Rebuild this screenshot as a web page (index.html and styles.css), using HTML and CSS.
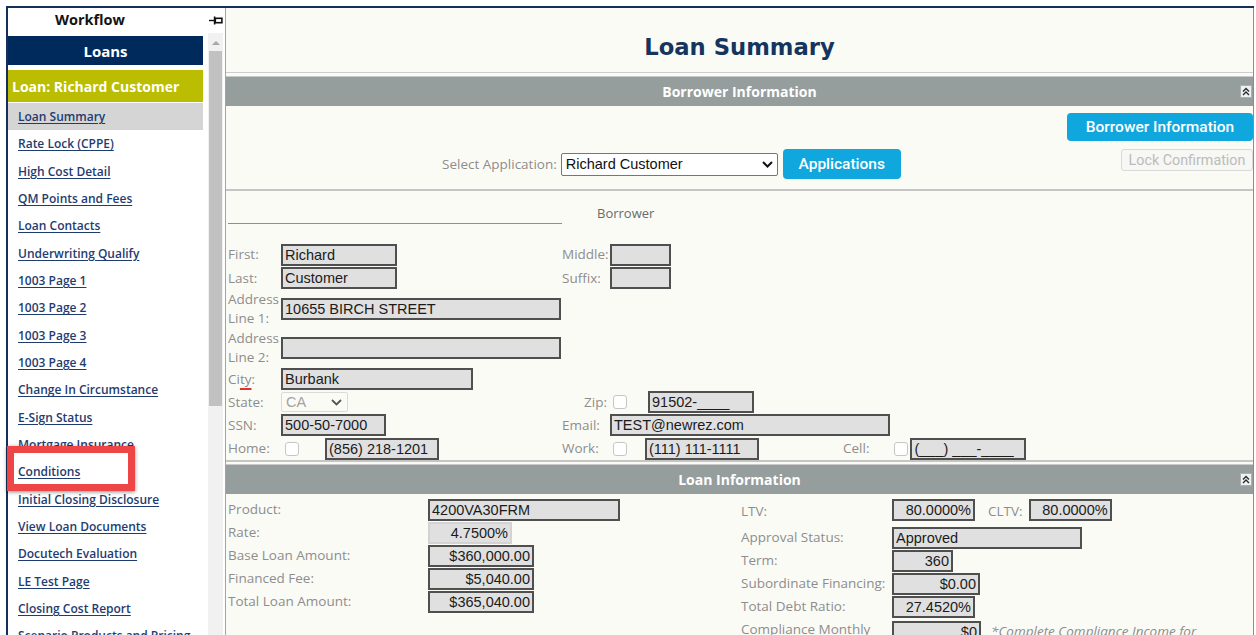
FILE: index.html
```html
<!DOCTYPE html>
<html lang="en">
<head>
<meta charset="utf-8">
<title>Loan Summary</title>
<link rel="stylesheet" href="styles.css">
</head>
<body>
<div class="window">
  <aside class="sidebar">
    <div class="wf-head">
      <span class="wf-title">Workflow</span>
      <svg class="pin" width="14" height="9" viewBox="0 0 14 9" aria-hidden="true">
        <path d="M0 4.5H5" stroke="#111" stroke-width="1.4"/>
        <path d="M5.6 0.5V8.5" stroke="#111" stroke-width="1.6"/>
        <rect x="6.3" y="2.3" width="6.6" height="4.4" fill="none" stroke="#111" stroke-width="1.6"/>
      </svg>
    </div>
    <div class="wf-body">
      <nav class="wf-list">
        <div class="loans-bar">Loans</div>
        <div class="loan-bar">Loan: Richard Customer</div>
        <a class="wf-link is-active" href="#">Loan Summary</a>
        <a class="wf-link" href="#">Rate Lock (CPPE)</a>
        <a class="wf-link" href="#">High Cost Detail</a>
        <a class="wf-link" href="#">QM Points and Fees</a>
        <a class="wf-link" href="#">Loan Contacts</a>
        <a class="wf-link" href="#">Underwriting Qualify</a>
        <a class="wf-link" href="#">1003 Page 1</a>
        <a class="wf-link" href="#">1003 Page 2</a>
        <a class="wf-link" href="#">1003 Page 3</a>
        <a class="wf-link" href="#">1003 Page 4</a>
        <a class="wf-link" href="#">Change In Circumstance</a>
        <a class="wf-link" href="#">E-Sign Status</a>
        <a class="wf-link" href="#">Mortgage Insurance</a>
        <a class="wf-link" href="#">Conditions</a>
        <a class="wf-link" href="#">Initial Closing Disclosure</a>
        <a class="wf-link" href="#">View Loan Documents</a>
        <a class="wf-link" href="#">Docutech Evaluation</a>
        <a class="wf-link" href="#">LE Test Page</a>
        <a class="wf-link" href="#">Closing Cost Report</a>
        <a class="wf-link" href="#">Scenario Products and Pricing</a>
      </nav>
      <div class="scrollbar">
        <span class="scroll-up"></span>
        <span class="scroll-thumb"></span>
      </div>
    </div>
    <div class="callout"></div>
  </aside>

  <main class="main">
    <h1 class="page-title">Loan Summary</h1>

    <div class="bar">
      <span></span>
      <span class="bar-title">Borrower Information</span>
      <svg class="collapse" width="12" height="13" viewBox="0 0 12 13" aria-hidden="true">
        <rect x="0.5" y="0.5" width="11" height="12" fill="#eef1f1" stroke="#a9b0b0"/>
        <path d="M3 6.5L6 3.5L9 6.5M3 10L6 7L9 10" fill="none" stroke="#2a2a2a" stroke-width="1.4"/>
      </svg>
    </div>

    <div class="app-row">
      <div class="app-select">
        <span class="lbl">Select Application:</span>
        <div class="select">
          <span>Richard Customer</span>
          <svg width="11" height="7" viewBox="0 0 11 7" aria-hidden="true"><path d="M1 1l4.5 4.5L10 1" fill="none" stroke="#111" stroke-width="2"/></svg>
        </div>
        <button class="btn btn-apps" type="button">Applications</button>
      </div>
      <div class="app-actions">
        <button class="btn btn-borrower" type="button">Borrower Information</button>
        <button class="btn-lock" type="button" disabled>Lock Confirmation</button>
      </div>
    </div>

    <section class="borrower">
      <div class="b-head">
        <div class="b-head-line"></div>
        <div class="b-head-title">Borrower</div>
      </div>

      <div class="frow">
        <span class="lbl">First:</span>
        <div class="cell"><span class="fld w116">Richard</span></div>
        <span class="lbl">Middle:</span>
        <div class="cell"><span class="fld w61"></span></div>
      </div>
      <div class="frow h24">
        <span class="lbl">Last:</span>
        <div class="cell"><span class="fld w116">Customer</span></div>
        <span class="lbl">Suffix:</span>
        <div class="cell"><span class="fld w61"></span></div>
      </div>
      <div class="frow h38">
        <span class="lbl">Address<br>Line 1:</span>
        <div class="cell"><span class="fld w280">10655 BIRCH STREET</span></div>
      </div>
      <div class="frow h39">
        <span class="lbl">Address<br>Line 2:</span>
        <div class="cell"><span class="fld w280"></span></div>
      </div>
      <div class="frow h24">
        <span class="lbl">Ci<span class="spell">ty</span>:</span>
        <div class="cell"><span class="fld w192">Burbank</span></div>
      </div>
      <div class="frow h22">
        <span class="lbl">State:</span>
        <div class="cell">
          <div class="sel-off">
            <span>CA</span>
            <svg width="11" height="7" viewBox="0 0 11 7" aria-hidden="true"><path d="M1 1l4.5 4.5L10 1" fill="none" stroke="#555" stroke-width="1.8"/></svg>
          </div>
        </div>
        <span class="lbl r">Zip:</span>
        <div class="cell">
          <span class="chk ml3"></span>
          <span class="fld w106 ml21">91502-____</span>
        </div>
      </div>
      <div class="frow h24">
        <span class="lbl">SSN:</span>
        <div class="cell"><span class="fld w105">500-50-7000</span></div>
        <span class="lbl">Email:</span>
        <div class="cell"><span class="fld w280">TEST@newrez.com</span></div>
      </div>
      <div class="frow">
        <span class="lbl">Home:</span>
        <div class="cell">
          <span class="chk ml4"></span>
          <span class="fld w114 ml26">(856) 218-1201</span>
        </div>
        <span class="lbl">Work:</span>
        <div class="cell">
          <span class="chk ml3"></span>
          <span class="fld w114 ml18">(111) 111-1111</span>
          <span class="lbl ml84">Cell:</span>
          <span class="chk ml25"></span>
          <span class="fld w116 ml2">(___) ___-____</span>
        </div>
      </div>
    </section>

    <div class="bar bar-tight">
      <span></span>
      <span class="bar-title">Loan Information</span>
      <svg class="collapse" width="12" height="13" viewBox="0 0 12 13" aria-hidden="true">
        <rect x="0.5" y="0.5" width="11" height="12" fill="#eef1f1" stroke="#a9b0b0"/>
        <path d="M3 6.5L6 3.5L9 6.5M3 10L6 7L9 10" fill="none" stroke="#2a2a2a" stroke-width="1.4"/>
      </svg>
    </div>

    <section class="loan">
      <div class="loan-left">
        <div class="lrow"><span class="lbl lcol">Product:</span><span class="fld w192">4200VA30FRM</span></div>
        <div class="lrow"><span class="lbl lcol">Rate:</span><span class="fld soft num w84">4.7500%</span></div>
        <div class="lrow"><span class="lbl lcol">Base Loan Amount:</span><span class="fld num w106">$360,000.00</span></div>
        <div class="lrow"><span class="lbl lcol">Financed Fee:</span><span class="fld num w106">$5,040.00</span></div>
        <div class="lrow"><span class="lbl lcol">Total Loan Amount:</span><span class="fld num w106">$365,040.00</span></div>
      </div>
      <div class="loan-right">
        <div class="lrow ltv">
          <span class="lbl rcol">LTV:</span>
          <span class="fld num w83">80.0000%</span>
          <span class="lbl ml13">CLTV:</span>
          <span class="fld num w83 ml6">80.0000%</span>
        </div>
        <div class="lrow"><span class="lbl rcol">Approval Status:</span><span class="fld w190">Approved</span></div>
        <div class="lrow"><span class="lbl rcol">Term:</span><span class="fld num w61">360</span></div>
        <div class="lrow"><span class="lbl rcol">Subordinate Financing:</span><span class="fld num w88">$0.00</span></div>
        <div class="lrow"><span class="lbl rcol">Total Debt Ratio:</span><span class="fld num w83">27.4520%</span></div>
        <div class="lrow income">
          <span class="lbl rcol wrap">Compliance Monthly Income:</span>
          <span class="fld num w89">$0</span>
          <span class="note">*Complete Compliance Income for</span>
        </div>
      </div>
    </section>
  </main>
</div>
</body>
</html>
```

FILE: styles.css
```css
* { box-sizing: border-box; }

html, body { margin: 0; padding: 0; }

body {
  width: 1256px;
  height: 635px;
  overflow: hidden;
  background: #fff;
  font-family: "Open Sans", "Liberation Sans", sans-serif;
}

.window {
  display: flex;
  width: 1248px;
  height: 629px;
  margin: 6px 0 0 6px;
  border-top: 2px solid #14305a;
  border-left: 2px solid #14305a;
}

/* ---------- workflow sidebar ---------- */
.sidebar {
  position: relative;
  width: 217px;
  flex: none;
  display: flex;
  flex-direction: column;
  background: #fff;
}

.wf-head {
  height: 28px;
  flex: none;
  display: flex;
  align-items: flex-start;
  padding-top: 2px;
}

.wf-title {
  margin-left: 47px;
  font-size: 14.5px;
  font-weight: 700;
  line-height: 20px;
  color: #141414;
}

.pin { margin: 6px 2px 0 auto; }

.wf-body {
  flex: 1;
  min-height: 0;
  display: flex;
}

.wf-list {
  width: 195px;
  flex: none;
  overflow: hidden;
}

.loans-bar {
  height: 29px;
  display: flex;
  align-items: center;
  justify-content: center;
  background: #012a5c;
  color: #fff;
  font-size: 15px;
  font-weight: 700;
}

.loan-bar {
  height: 32px;
  margin-top: 5px;
  padding-left: 4px;
  display: flex;
  align-items: center;
  background: #bbbd00;
  color: #fff;
  font-size: 14px;
  font-weight: 700;
  white-space: nowrap;
}

.wf-link {
  height: 27.33px;
  padding-left: 10px;
  display: flex;
  align-items: center;
  color: #1f3c70;
  font-size: 12px;
  font-weight: 600;
  text-decoration: underline;
  text-underline-offset: 2px;
  white-space: nowrap;
}

.wf-link.is-active {
  margin-top: 1px;
  background: #d5d5d5;
}

.scrollbar {
  width: 15px;
  margin: -3px 0 0 5px;
  display: flex;
  flex-direction: column;
  align-items: center;
  background: #f1f1f1;
}

.scroll-up {
  margin-top: 8px;
  border-left: 4px solid transparent;
  border-right: 4px solid transparent;
  border-bottom: 4px solid #a6a6a6;
}

.scroll-thumb {
  width: 13px;
  height: 355px;
  margin-top: 6px;
  background: #c1c1c1;
}

/* highlight frame drawn over the Conditions link */
.callout {
  position: absolute;
  left: -1px;
  top: 438px;
  width: 128px;
  height: 45px;
  border: 7px solid #ee4646;
  box-shadow: 0 1px 4px rgba(0, 0, 0, 0.45);
}

/* ---------- main page ---------- */
.main {
  flex: 1;
  min-width: 0;
  overflow: hidden;
  background: #fbfbf6;
  border-left: 1px solid #a3a3a3;
  border-right: 1px solid #8c8c8c;
}

.page-title {
  margin: 0;
  height: 65px;
  padding-top: 24px;
  border-bottom: 1px solid #cdcdcd;
  text-align: center;
  font: 700 22.7px/30px "DejaVu Sans", sans-serif;
  color: #15355e;
}

.bar {
  display: grid;
  grid-template-columns: 1fr auto 1fr;
  align-items: center;
  height: 30px;
  margin-top: 3px;
  border-top: 1px solid #c9c9c9;
  background: #969d9d;
}

.bar-tight { margin-top: 2px; }

.bar-title {
  color: #fff;
  font-size: 14px;
  font-weight: 700;
}

.collapse {
  justify-self: end;
  margin-right: 1px;
}

/* application chooser */
.app-row {
  display: flex;
  height: 85px;
  padding: 7px 0 10px 216px;
  border-bottom: 2px solid #c5c5c5;
}

.app-select {
  align-self: flex-end;
  display: flex;
  align-items: center;
}

.app-select .lbl { margin-right: 4px; }

.select {
  width: 217px;
  height: 23px;
  padding: 0 4px;
  display: flex;
  align-items: center;
  justify-content: space-between;
  background: #fff;
  border: 1px solid #767676;
  border-radius: 2px;
  font: 14.5px "Liberation Sans", Arial, sans-serif;
  color: #111;
}

.btn {
  padding: 0;
  border: 0;
  border-radius: 4px;
  background: #0fa7dd;
  color: #fff;
  font: 500 15.5px Roboto, sans-serif;
}

.btn-apps {
  width: 118px;
  height: 30px;
  margin-left: 5px;
}

.app-actions {
  margin-left: auto;
  display: flex;
  flex-direction: column;
  align-items: flex-end;
  gap: 8px;
}

.btn-borrower {
  width: 186px;
  height: 28px;
}

.btn-lock {
  width: 132px;
  height: 22px;
  padding: 0;
  background: #f7f7f3;
  border: 1px solid #d9d9d9;
  border-radius: 3px;
  color: #bcbcbc;
  font: 400 14.3px Roboto, sans-serif;
}

/* borrower form */
.borrower {
  padding-left: 2px;
  border-bottom: 2px solid #c5c5c5;
}

.b-head {
  display: flex;
  height: 33px;
  margin-bottom: 19px;
}

.b-head-line {
  width: 334px;
  border-bottom: 1px solid #8e8e8e;
}

.b-head-title {
  align-self: flex-end;
  margin: 0 0 2px 35px;
  font-size: 13px;
  line-height: 18px;
  color: #6a6a6a;
}

.frow {
  display: grid;
  grid-template-columns: 53px 281px 48px 1fr;
  align-items: center;
  height: 23px;
}

.frow.h22 { height: 22px; }
.frow.h24 { height: 24px; }
.frow.h38 { height: 38px; }
.frow.h39 { height: 39px; }

.cell {
  display: flex;
  align-items: center;
}

.lbl {
  font-size: 13.5px;
  line-height: 19px;
  color: #8d8d8d;
  white-space: nowrap;
}

.lbl.r {
  text-align: right;
  padding-right: 3px;
}

.spell {
  text-decoration: underline 2px #e03030;
  text-underline-offset: 4px;
}

.fld {
  display: block;
  flex: none;
  height: 22px;
  padding: 0 2px;
  background: #e0e0e0;
  border: 2px solid #4f4f4f;
  font: 14.5px/18px "Liberation Sans", Arial, sans-serif;
  color: #1b1b1b;
  white-space: nowrap;
  overflow: hidden;
}

.fld.num { text-align: right; }
.fld.soft { border-color: #d3d3d3; }

.chk {
  flex: none;
  width: 14px;
  height: 14px;
  background: #fff;
  border: 1px solid #c6c6c6;
  border-radius: 3px;
}

.sel-off {
  width: 67px;
  height: 20px;
  padding: 0 5px 0 4px;
  display: flex;
  align-items: center;
  justify-content: space-between;
  background: #fbfbf6;
  border: 1px solid #dadada;
  border-radius: 2px;
  font: 14.5px "Liberation Sans", Arial, sans-serif;
  color: #a2a2a2;
}

/* field widths and gaps */
.w61 { width: 61px; }
.w83 { width: 83px; }
.w84 { width: 84px; }
.w88 { width: 88px; }
.w89 { width: 89px; }
.w105 { width: 105px; }
.w106 { width: 106px; }
.w114 { width: 114px; }
.w116 { width: 116px; }
.w190 { width: 190px; }
.w192 { width: 192px; }
.w280 { width: 280px; }

.ml2 { margin-left: 2px; }
.ml3 { margin-left: 3px; }
.ml4 { margin-left: 4px; }
.ml6 { margin-left: 6px; }
.ml13 { margin-left: 13px; }
.ml18 { margin-left: 18px; }
.ml21 { margin-left: 21px; }
.ml25 { margin-left: 25px; }
.ml26 { margin-left: 26px; }
.ml84 { margin-left: 84px; }

/* loan information */
.loan {
  display: flex;
  padding-top: 4px;
}

.loan-left {
  width: 514px;
  padding-left: 2px;
}

.loan-right {
  flex: 1;
  padding-left: 1px;
}

.lrow {
  display: flex;
  align-items: center;
  height: 23px;
}

.lcol { width: 200px; flex: none; }
.rcol { width: 151px; flex: none; }

.lrow.ltv {
  height: 28px;
  align-items: flex-start;
}

.lrow.ltv .fld { margin-top: 1px; }
.lrow.ltv .lbl { padding-top: 4px; }

.lrow.income {
  height: 40px;
  align-items: flex-start;
}

.lrow.income .lbl { padding-top: 2px; }
.lrow.income .fld { margin-top: 3px; }
.lbl.wrap { white-space: normal; }

.note {
  margin: 4px 0 0 10px;
  font-size: 13.5px;
  line-height: 19px;
  font-style: italic;
  color: #8d8d8d;
  white-space: nowrap;
}
```
